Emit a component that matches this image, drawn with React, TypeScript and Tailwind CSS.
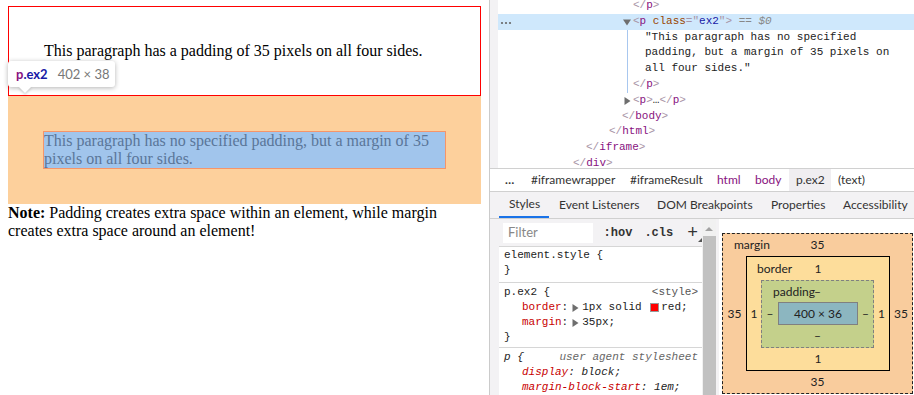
import React from 'react';

const mono = "font-['Liberation_Mono',monospace] text-[11px]";
const ui = "font-['Lato',sans-serif] text-[12px]";

function Triangle({ down }: { down?: boolean }) {
  return (
    <svg width="8" height="8" viewBox="0 0 8 8" className="inline-block">
      {down ? <path d="M0 1.5h8L4 7.5z" fill="#6e6e6e" /> : <path d="M1.5 0v8L7.5 4z" fill="#6e6e6e" />}
    </svg>
  );
}

function Tag({ close, name }: { close?: boolean; name: string }) {
  return (
    <span>
      <span className="text-[#a894a6]">{close ? '</' : '<'}</span>
      <span className="text-[#881280]">{name}</span>
      <span className="text-[#a894a6]">&gt;</span>
    </span>
  );
}

function ElementsTree() {
  const row = 'h-[15.8px] leading-[15.8px] whitespace-pre';
  return (
    <div className={`h-[168px] overflow-hidden bg-white ${mono} text-[#222]`}>
      <div className="-mt-[2px]">
        <div className={`${row} pl-[135px]`}>
          <Tag close name="p" />
        </div>
        <div className={`${row} relative bg-[#cfe8fc] flex items-center`}>
          <svg width="12" height="4" viewBox="0 0 12 4" className="absolute left-[2px] top-[7px]">
            <circle cx="2" cy="2" r="1.1" fill="#666" />
            <circle cx="6" cy="2" r="1.1" fill="#666" />
            <circle cx="10" cy="2" r="1.1" fill="#666" />
          </svg>
          <div className="pl-[125px] flex items-center">
            <span className="w-[10px] flex items-center">
              <Triangle down />
            </span>
            <span className="text-[#a894a6]">&lt;</span>
            <span className="text-[#881280]">p</span>
            <span> </span>
            <span className="text-[#994500]">class</span>
            <span className="text-[#a894a6]">="</span>
            <span className="text-[#1a1aa6]">ex2</span>
            <span className="text-[#a894a6]">"&gt;</span>
            <span className="text-[#888] italic"> == $0</span>
          </div>
        </div>
        <div className="ml-[129px] border-l border-[#a8c7ef]">
          <div className={`${row} pl-[17px]`}>"This paragraph has no specified</div>
          <div className={`${row} pl-[17px]`}>padding, but a margin of 35 pixels on</div>
          <div className={`${row} pl-[17px]`}>all four sides."</div>
          <div className={`${row} pl-[5px]`}>
            <Tag close name="p" />
          </div>
        </div>
        <div className={`${row} pl-[125px] flex items-center`}>
          <span className="w-[10px] flex items-center">
            <Triangle />
          </span>
          <Tag name="p" />
          <span>…</span>
          <Tag close name="p" />
        </div>
        <div className={`${row} pl-[124px]`}>
          <Tag close name="body" />
        </div>
        <div className={`${row} pl-[111px]`}>
          <Tag close name="html" />
        </div>
        <div className={`${row} pl-[88px]`}>
          <Tag close name="iframe" />
        </div>
        <div className={`${row} pl-[75px]`}>
          <Tag close name="div" />
        </div>
      </div>
    </div>
  );
}

function Breadcrumbs() {
  return (
    <div className={`h-[24px] border-y border-[#d0d0d0] bg-white flex items-center ${ui} text-[#333]`}>
      <span className="w-[36px] pl-[15px] font-bold">…</span>
      <span className="w-[98px] pl-[5px]">#iframewrapper</span>
      <span className="w-[87px] pl-[6px]">#iframeResult</span>
      <span className="w-[38px] pl-[6px] text-[#881280]">html</span>
      <span className="w-[40px] pl-[6px] text-[#881280]">body</span>
      <span className="w-[42px] h-full flex items-center pl-[7px] bg-[#f0eef1]">p.ex2</span>
      <span className="pl-[7px]">(text)</span>
    </div>
  );
}

function Tabs() {
  const tab = 'h-full flex items-center';
  return (
    <div className={`h-[27px] border-b border-[#d0d0d0] bg-[#f3f2f4] flex pl-[9px] ${ui} text-[#333]`}>
      <div className={`${tab} w-[50px] pl-[10px] border-b-2 border-[#1a73e8]`}>Styles</div>
      <div className={`${tab} w-[98px] pl-[10px]`}>Event Listeners</div>
      <div className={`${tab} w-[114px] pl-[10px]`}>DOM Breakpoints</div>
      <div className={`${tab} w-[72px] pl-[10px]`}>Properties</div>
      <div className={`${tab} pl-[10px] whitespace-nowrap`}>Accessibility</div>
    </div>
  );
}

function StylesPane() {
  const line = 'h-[15px] leading-[15px] whitespace-pre';
  return (
    <div className="w-[212px] shrink-0 flex flex-col bg-[#f3f2f4] pl-[9px]">
      <div className="h-[28px] flex items-center pl-[4px] pr-[4px]">
        <div className={`w-[90px] h-[20px] bg-white flex items-center pl-[5px] ${ui} text-[13px] text-[#888]`}>Filter</div>
        <div className={`flex-1 flex items-center ${mono} text-[12px] text-[#333]`}>
          <span className="ml-[11px] font-bold">:hov</span>
          <span className="ml-[12px] font-bold">.cls</span>
          <span className="ml-[14px] relative text-[18px] leading-[18px] font-light">
            +
            <svg width="4" height="4" viewBox="0 0 4 4" className="absolute -right-[4px] bottom-[0px]">
              <path d="M4 0v4H0z" fill="#555" />
            </svg>
          </span>
        </div>
      </div>
      <div className={`flex-1 bg-white ${mono} text-[#222]`}>
        <div className="border-t border-[#d6d6d6] pt-[1px] pb-[4px] pl-[5px]">
          <div className={line}>element.style {'{'}</div>
          <div className={line}>{'}'}</div>
        </div>
        <div className="border-t border-[#d6d6d6] pt-[2px] pb-[2px] pl-[5px] pr-[4px]">
          <div className={`${line} flex justify-between`}>
            <span>p.ex2 {'{'}</span>
            <span className="text-[#555]">&lt;style&gt;</span>
          </div>
          <div className={`${line} pl-[18px] flex items-center`}>
            <span className="text-[#c80000]">border</span>
            <span>:</span>
            <span className="w-[14px] flex items-center justify-center">
              <Triangle />
            </span>
            <span>1px solid </span>
            <span className="w-[9px] h-[9px] bg-[#ff0000] border border-[#999] mx-[2px]" />
            <span>red;</span>
          </div>
          <div className={`${line} pl-[18px] flex items-center`}>
            <span className="text-[#c80000]">margin</span>
            <span>:</span>
            <span className="w-[14px] flex items-center justify-center">
              <Triangle />
            </span>
            <span>35px;</span>
          </div>
          <div className={line}>{'}'}</div>
        </div>
        <div className="border-t border-[#d6d6d6] pt-[2px] pl-[5px] pr-[4px] italic">
          <div className={`${line} flex justify-between`}>
            <span>p {'{'}</span>
            <span className="text-[#666]">user agent stylesheet</span>
          </div>
          <div className={`${line} pl-[18px]`}>
            <span className="text-[#c80000]">display</span>: block;
          </div>
          <div className={`${line} pl-[18px]`}>
            <span className="text-[#c80000]">margin-block-start</span>: 1em;
          </div>
        </div>
      </div>
    </div>
  );
}

function Scrollbar() {
  return (
    <div className="w-[14px] shrink-0 bg-[#f1f1f1] flex flex-col items-center">
      <svg width="8" height="6" viewBox="0 0 8 6" className="mt-[7px]">
        <path d="M0 5h8L4 1z" fill="#a3a3a3" />
      </svg>
      <div className="mt-[4px] w-[13px] flex-1 bg-[#c1c1c1]" />
    </div>
  );
}

function BoxModel() {
  return (
    <div className="flex-1 bg-[#f3f2f4] pl-[3px]">
      <div className={`h-full bg-white pl-[3px] pt-[14px] ${ui} text-[#222]`}>
        <div className="relative w-[191px] border border-dashed border-[#222] bg-[#f9cc9d]">
          <span className="absolute left-[11px] top-[4px] leading-[14px]">margin</span>
          <div className="h-[22px] flex items-center justify-center">35</div>
          <div className="flex items-center">
            <div className="w-[23px] text-center">35</div>
            <div className="relative w-[144px] border border-black bg-[#fddd9b]">
              <span className="absolute left-[10px] top-[5px] leading-[14px]">border</span>
              <div className="h-[23px] flex items-center justify-center">1</div>
              <div className="flex items-center">
                <div className="w-[14px] text-center">1</div>
                <div className="relative w-[113px] border border-dashed border-[#808080] bg-[#c4d08b]">
                  <span className="absolute left-[11px] top-[4px] leading-[14px]">padding</span>
                  <div className="h-[21px] flex items-center justify-center">–</div>
                  <div className="flex items-center">
                    <div className="w-[16px] text-center">–</div>
                    <div className="w-[80px] h-[23px] border border-[#808080] bg-[#8cb6c0] flex items-center justify-center">
                      400 × 36
                    </div>
                    <div className="flex-1 text-center">–</div>
                  </div>
                  <div className="h-[22px] flex items-center justify-center">–</div>
                </div>
                <div className="flex-1 text-center">1</div>
              </div>
              <div className="h-[22px] flex items-center justify-center">1</div>
            </div>
            <div className="flex-1 text-center">35</div>
          </div>
          <div className="h-[22px] flex items-center justify-center">35</div>
        </div>
      </div>
    </div>
  );
}

function PreviewPane() {
  return (
    <div className="relative w-[489px] shrink-0 bg-white px-[8px] pt-[6px] font-['Liberation_Serif',serif] text-[16px] leading-[18px] text-black">
      <p className="border border-[#ff0000] p-[35px]">This paragraph has a padding of 35 pixels on all four sides.</p>
      <div className="bg-[#fdd09c] p-[35px]">
        <p className="border border-[#f5956a] bg-[#a1c5ec] text-[#5a7699]">
          This paragraph has no specified padding, but a margin of 35 pixels on all four sides.
        </p>
      </div>
      <p>
        <b>Note:</b> Padding creates extra space within an element, while margin creates extra space around an element!
      </p>

      <div className="absolute left-[8px] top-[61px] h-[26px] w-[107px] rounded-[3px] bg-white shadow-[0_1px_5px_rgba(0,0,0,0.3)] flex items-center pl-[8px] gap-[10px] font-['Lato',sans-serif] text-[13px] leading-[15px]">
        <span className="font-bold">
          <span className="text-[#881280]">p</span>
          <span className="text-[#1a1aa6]">.ex2</span>
        </span>
        <span className="text-[#777]">402 × 38</span>
      </div>
      <div className="absolute left-[18px] top-[86px] w-0 h-0 border-x-[7px] border-x-transparent border-t-[7px] border-t-white drop-shadow-[0_2px_1px_rgba(0,0,0,0.15)]" />
    </div>
  );
}

export default function App() {
  return (
    <div className="w-[914px] h-[395px] overflow-hidden flex bg-white">
      <PreviewPane />
      <div className="flex-1 flex flex-col border-l border-[#cbcbcb] bg-[#f3f2f4] min-w-0">
        <div className="pl-[8px] bg-[#f3f2f4]">
          <ElementsTree />
        </div>
        <Breadcrumbs />
        <Tabs />
        <div className="flex-1 flex min-h-0">
          <StylesPane />
          <Scrollbar />
          <BoxModel />
        </div>
      </div>
    </div>
  );
}
